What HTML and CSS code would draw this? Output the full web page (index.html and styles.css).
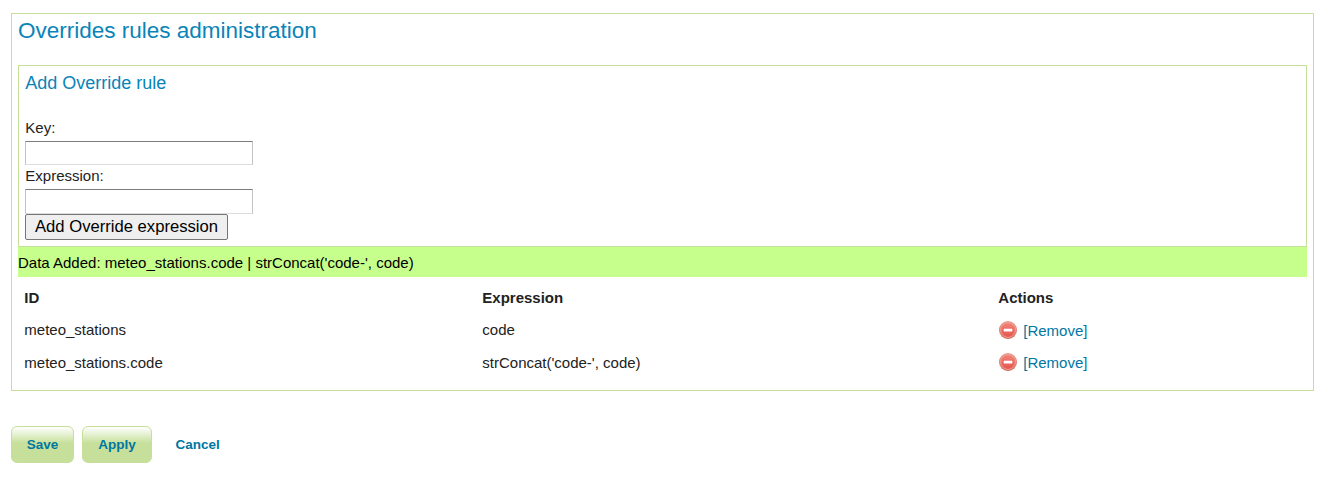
FILE: index.html
```
<!DOCTYPE html>
<html lang="en">
<head>
<meta charset="utf-8">
<title>Overrides rules administration</title>
<link rel="stylesheet" href="styles.css">
</head>
<body>
<svg class="defs" width="0" height="0" aria-hidden="true">
  <defs>
    <linearGradient id="rim" x1="0" y1="0" x2="0" y2="1">
      <stop offset="0" stop-color="#ec9a8c"/>
      <stop offset="1" stop-color="#cf6558"/>
    </linearGradient>
    <linearGradient id="disc" x1="0" y1="0" x2="0" y2="1">
      <stop offset="0" stop-color="#f0857a"/>
      <stop offset="1" stop-color="#e5544e"/>
    </linearGradient>
    <symbol id="remove" viewBox="0 0 18 18">
      <circle cx="9" cy="9" r="9" fill="url(#rim)"/>
      <circle cx="9" cy="9" r="7.4" fill="url(#disc)" stroke="#f2a598" stroke-width=".9"/>
      <rect x="4.7" y="7.7" width="8.6" height="2.7" rx=".3" fill="#fff"/>
    </symbol>
  </defs>
</svg>
<form class="page" onsubmit="return false">
  <section class="panel">
    <h1 class="title">Overrides rules administration</h1>
    <section class="add-rule">
      <h2 class="subtitle">Add Override rule</h2>
      <label class="label" for="key">Key:</label>
      <input class="field" id="key" type="text">
      <label class="label" for="expression">Expression:</label>
      <input class="field field-expression" id="expression" type="text">
      <button class="add" type="button">Add Override expression</button>
    </section>
    <p class="message">Data Added: meteo_stations.code | strConcat('code-', code)</p>
    <table class="rules">
      <thead>
        <tr><th class="col-id">ID</th><th class="col-expression">Expression</th><th>Actions</th></tr>
      </thead>
      <tbody>
        <tr class="first">
          <td>meteo_stations</td><td>code</td>
          <td><a class="remove"><svg class="icon"><use href="#remove"/></svg><span class="remove-text">[Remove]</span></a></td>
        </tr>
        <tr class="second">
          <td>meteo_stations.code</td><td>strConcat('code-', code)</td>
          <td><a class="remove"><svg class="icon"><use href="#remove"/></svg><span class="remove-text">[Remove]</span></a></td>
        </tr>
      </tbody>
    </table>
  </section>
  <div class="actions">
    <a class="btn save">Save</a>
    <a class="btn apply">Apply</a>
    <a class="cancel">Cancel</a>
  </div>
</form>
</body>
</html>
```
FILE: styles.css
```
* { box-sizing: border-box; }
body {
  margin: 0;
  background: #fff;
  color: #222;
  font: 15px/22px "Liberation Sans", Arial, sans-serif;
}
.defs { display: block; }
.page { padding: 13px 14px 0 11px; }
.panel {
  height: 378px;
  padding: 0 6px;
  border: 1px solid #c6e09b;
}
.title, .subtitle { margin: 0; color: #0a84b8; font-weight: normal; }
.title { height: 51px; padding-top: 3px; font-size: 22.5px; line-height: 27px; }
.add-rule {
  display: flex;
  flex-direction: column;
  align-items: flex-start;
  height: 182px;
  padding: 6px;
  border: 1px solid #c6e09b;
}
.subtitle { height: 45px; padding-left: .3px; font-size: 18px; line-height: 22px; }
.label { height: 24px; padding-left: .3px; line-height: 22px; }
.field {
  width: 228px;
  height: 24px;
  margin: 0;
  border: 1px solid;
  border-color: #7c7c7c #c3c3c3 #ddd #c3c3c3;
}
.field-expression { height: 25px; }
.add {
  width: 203px;
  height: 26px;
  padding: 0;
  border: 1px solid #767676;
  border-radius: 2px;
  background: #efefef;
  color: #000;
  font: 16.64px/22px "Liberation Sans", Arial, sans-serif;
}
.message { height: 30px; margin: 0; background: #c7ff8c; color: #000; line-height: 32px; }
.rules { width: 100%; margin-top: 5px; border-spacing: 0; table-layout: fixed; }
.rules th, .rules td { padding: 0 6px 0 6.3px; text-align: left; }
.rules th { height: 31px; vertical-align: middle; }
.rules td { vertical-align: top; }
.rules .first td { height: 33px; padding-top: 6px; }
.rules .second td { height: 32px; padding-top: 6px; }
.rules .second td:last-child { padding-top: 5px; }
.col-id { width: 458px; }
.col-expression { width: 516px; }
.remove { display: flex; align-items: flex-start; gap: 6.3px; padding-left: .7px; color: #0076a1; }
.icon { width: 18px; height: 18px; margin-top: 2px; }
.rules .first .icon { margin-top: 2px; }
.remove-text { padding-top: 1px; }
.actions { display: flex; padding-top: 35px; color: #0076a1; font-size: 13.5px; font-weight: bold; line-height: 35px; }
.btn {
  height: 37px;
  margin-right: 8px;
  border: 1px solid #c6e09b;
  border-radius: 6px;
  background: linear-gradient(#fff 0, #c6e09b 16px);
  text-align: center;
}
.save { width: 63px; }
.apply { width: 70px; }
.cancel { margin-left: 15.5px; line-height: 37px; }
```
